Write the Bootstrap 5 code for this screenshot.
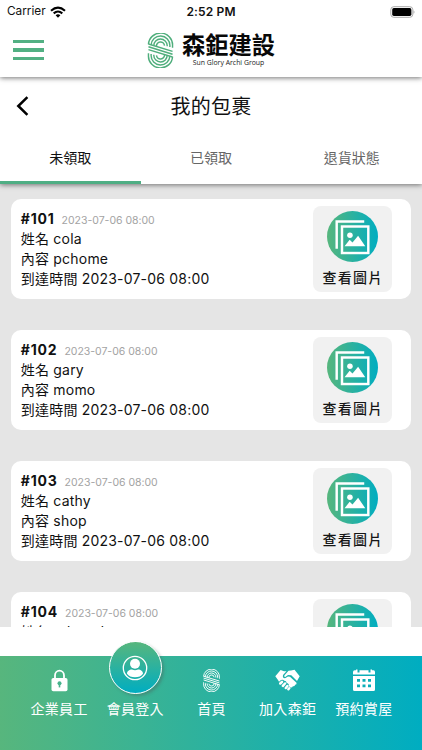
<!DOCTYPE html>
<html lang="zh-Hant">
<head>
<meta charset="utf-8">
<meta name="viewport" content="width=device-width, initial-scale=1">
<title>我的包裹</title>
<link href="https://cdn.jsdelivr.net/npm/bootstrap@5.3.0/dist/css/bootstrap.min.css" rel="stylesheet">
<style>
body{font-family:Inter,"Noto Sans CJK TC",sans-serif;color:#111;height:750px;overflow:hidden;background:#fff}
.app{height:750px}
svg{display:block;flex:none}
.status{height:23px;font-size:11.8px;padding:0 7px 0 7px}
.status .clock{font-weight:600;font-size:12px;letter-spacing:.15px}
.status>div{flex:1 1 0}
.topbar{height:77px;box-shadow:0 1px 5px rgba(0,0,0,.55);z-index:3}
.brandrow{height:54px;padding:0 13px}
.burger{width:31px;gap:5.6px;display:flex;flex-direction:column;border:0;background:none;padding:0}
.burger span{height:3.2px;background:#52b083}
.sidecell{width:118px}
.brandname{font:700 23.3px/27px "Noto Sans CJK TC",sans-serif;color:#080808;white-space:nowrap;margin-top:-2px}
.brandsub{font:6.9px/9px "Open Sans",sans-serif;color:#222;white-space:nowrap}
.heading{height:107px;box-shadow:0 1px 5px rgba(0,0,0,.5);z-index:2}
.titlerow{height:58px;padding:0 15px}
.titlerow h1{font-size:20px;font-weight:400;letter-spacing:.3px;padding-top:1px}
.tabs .nav-link{height:49px;line-height:46px;padding:0;color:#666;font-size:14px;font-weight:400;border-bottom:0}
.tabs .nav-link.active{color:#111;border-bottom:3px solid #4fae84}
.list{height:443px;background:#e5e5e5;padding:15px 11px 0 10.5px}
.parcel{height:100px;margin-bottom:31px;border-radius:10px;padding:7px 19px 0 10.3px}
.info{font-size:14px;line-height:20px;padding-top:2.5px;white-space:nowrap;letter-spacing:.2px}
.info>div{height:20px}
.num{font-weight:700;letter-spacing:.8px}
.stamp{font-size:10.5px;line-height:1;color:#a3a3a3;margin-left:7px;letter-spacing:-.02px}
.photo{width:79px;height:86px;background:#f1f1f1;border-radius:8px;padding-top:5px;border:0;color:#161616}
.photo div{font-size:14px;line-height:20px;letter-spacing:1.2px;margin-top:6px;font-weight:500;padding-left:1px}
.gap-strip{height:29px}
.bottom{height:94px;background:linear-gradient(90deg,#57b67d,#00adc1);padding:0 20px 0 21px;z-index:2}
.bottom a{width:76.2px;color:#fff;text-decoration:none;font-size:14px;letter-spacing:.3px;white-space:nowrap}
.icobox{height:43px;padding-top:13px}
.bottom .lbl{line-height:20px}
.avatar{width:53px;height:53px;border:1.5px solid #fff;border-radius:50%;background:linear-gradient(180deg,#57b67d,#00adc1);margin-top:-28px;box-shadow:2px 2px 3px rgba(80,80,80,.35);flex:none}
</style>
</head>
<body>
<svg width="0" height="0" class="position-absolute" aria-hidden="true">
<defs>
<linearGradient id="disc"><stop stop-color="#57b67d"/><stop offset="1" stop-color="#00adc1"/></linearGradient>
<symbol id="emblem" viewBox="0 0 25 34">
<g fill="none" stroke="currentColor" stroke-width="1.4">
<path d="M24.2 14.3V12.2A11.7 11.5 0 0 0 .8 11M21.6 13.500V12.200A9.100 9 0 0 0 3.400 11.600M19 12.800V12.200A6.500 6.400 0 0 0 6 12.400M16.400 12.200A3.900 3.800 0 0 0 8.600 13"/>
<path transform="rotate(180 12.5 17)" d="M24.2 14.3V12.2A11.7 11.5 0 0 0 .8 11M21.6 13.500V12.200A9.100 9 0 0 0 3.400 11.600M19 12.800V12.200A6.500 6.400 0 0 0 6 12.400M16.400 12.200A3.900 3.800 0 0 0 8.600 13"/>
<path d="M.8 10.700L24.200 17.800M.8 13.400L24.200 20.600M.8 16.200L24.200 23.300"/>
</g></symbol>
<symbol id="gallery" viewBox="0 0 50 50"><circle cx="25" cy="25" r="25" fill="url(#disc)"/>
<g fill="none" stroke="#fff" stroke-width="2.4"><path d="M9.500 37V10.200H36.500"/><rect x="14.700" y="15.200" width="25.800" height="26"/></g>
<circle cx="22.500" cy="23.700" r="2.700" fill="#fff"/><path d="M17.200 34.500L22.200 28.300 25 31 30.500 24.200 37.500 34.500Z" fill="#fff"/></symbol>
</defs></svg>
<main class="app d-flex flex-column">
<header class="topbar bg-white flex-shrink-0 position-relative">
<div class="status d-flex align-items-center">
<div class="d-flex align-items-center gap-1"><span>Carrier</span>
<svg width="16" height="12" viewBox="0 0 16 12"><g fill="none" stroke="#000" stroke-width="2.1"><path d="M1 4.7Q8-1.6 15 4.7M3.7 7.4Q8 3.6 12.3 7.4"/></g><path d="M5.6 9.2Q8 7.2 10.4 9.2L8 11.7Z"/></svg></div>
<div class="clock text-center text-nowrap">2:52 PM</div>
<div class="d-flex justify-content-end"><svg width="25" height="12" viewBox="0 0 25 12"><rect x=".8" y=".7" width="22" height="10.6" rx="3" fill="none" stroke="#aaa"/><rect x="2.2" y="2.1" width="19.200" height="7.8" rx="1.6"/><path d="M23.700 4.2q1.4 1.8 0 3.6z" fill="#888"/></svg></div>
</div>
<div class="brandrow d-flex align-items-center justify-content-between">
<div class="sidecell"><button class="burger" aria-label="選單"><span></span><span></span><span></span></button></div>
<div class="d-flex align-items-center gap-2">
<svg width="27" height="35" color="#4fae7c"><use href="#emblem"/></svg>
<div class="text-center"><div class="brandname">森鉅建設</div><div class="brandsub">Sun Glory Archi Group</div></div>
</div>
<div class="sidecell"></div>
</div>
</header>
<section class="heading bg-white flex-shrink-0 position-relative">
<div class="titlerow d-flex align-items-center justify-content-between">
<svg width="16" height="20" viewBox="0 0 16 20"><path d="M12.400 1.200L3.300 10 12.400 18.800" fill="none" stroke="#000" stroke-width="2.5"/></svg>
<h1 class="m-0">我的包裹</h1><span class="px-2"></span>
</div>
<nav class="tabs nav nav-fill row-cols-3 text-center">
<a class="nav-link active">未領取</a><a class="nav-link">已領取</a><a class="nav-link">退貨狀態</a>
</nav>
</section>
<section class="list flex-shrink-0 overflow-hidden">
<article class="parcel bg-white d-flex justify-content-between"><div class="info"><div><span class="num">#101</span><span class="stamp">2023-07-06 08:00</span></div><div>姓名 cola</div><div>內容 pchome</div><div>到達時間 2023-07-06 08:00</div></div><button class="photo d-flex flex-column align-items-center"><svg width="51" height="51"><use href="#gallery"/></svg><div>查看圖片</div></button></article>
<article class="parcel bg-white d-flex justify-content-between"><div class="info"><div><span class="num">#102</span><span class="stamp">2023-07-06 08:00</span></div><div>姓名 gary</div><div>內容 momo</div><div>到達時間 2023-07-06 08:00</div></div><button class="photo d-flex flex-column align-items-center"><svg width="51" height="51"><use href="#gallery"/></svg><div>查看圖片</div></button></article>
<article class="parcel bg-white d-flex justify-content-between"><div class="info"><div><span class="num">#103</span><span class="stamp">2023-07-06 08:00</span></div><div>姓名 cathy</div><div>內容 shop</div><div>到達時間 2023-07-06 08:00</div></div><button class="photo d-flex flex-column align-items-center"><svg width="51" height="51"><use href="#gallery"/></svg><div>查看圖片</div></button></article>
<article class="parcel bg-white d-flex justify-content-between"><div class="info"><div><span class="num">#104</span><span class="stamp">2023-07-06 08:00</span></div><div>姓名 edward</div></div><button class="photo d-flex flex-column align-items-center"><svg width="51" height="51"><use href="#gallery"/></svg></button></article>
</section>
<div class="gap-strip flex-shrink-0 bg-white"></div>
<nav class="bottom d-flex flex-shrink-0 position-relative">
<a class="d-flex flex-column align-items-center"><div class="icobox"><svg width="17" height="23" viewBox="0 0 17 23"><path d="M4 10V6.500a4.500 4.800 0 0 1 9 0V10" fill="none" stroke="#fff" stroke-width="1.8"/><rect x=".5" y="9" width="16" height="13.2" rx="1.8" fill="#fff"/><circle cx="8.5" cy="14.2" r="2" fill="#46b28c"/><path d="M7.700 15h1.600v3.400H7.700z" fill="#46b28c"/></svg></div><span class="lbl">企業員工</span></a>
<a class="d-flex flex-column align-items-center"><div class="icobox"><div class="avatar d-flex align-items-center justify-content-center"><svg width="26" height="26" viewBox="0 0 26 26"><circle cx="13" cy="13" r="11.7" fill="none" stroke="#fff" stroke-width="1.3"/><circle cx="13" cy="8.8" r="5" fill="#fff"/><path d="M5 18.800c0-2.500 2.200-4.200 5-4.200q3 1.200 6 0c2.800 0 5 1.700 5 4.200-1.500 2.400-4.500 3.500-8 3.500s-6.500-1.100-8-3.500Z" fill="#fff"/></svg></div></div><span class="lbl">會員登入</span></a>
<a class="d-flex flex-column align-items-center"><div class="icobox"><svg width="17" height="23"><use href="#emblem"/></svg></div><span class="lbl">首頁</span></a>
<a class="d-flex flex-column align-items-center"><div class="icobox"><svg width="25" height="22" viewBox="0 0 25 22"><g fill="#fff"><path d="M.3 7.200L5.600 1 9 2.300 11.500 2.300 8 6Q7.300 9.300 10 9.300L13 7.500 15 7.700 21.500 13.700Q22 15.800 20 15.700 19.800 17.700 17.800 17.200 17.300 19 15.500 18.500L14 17.200Q14 14.200 11.700 14 11.200 11.600 9.200 11.800 8 10 6 11L4 12.800 3 11Z"/><path d="M13.500 1.800L16 1.500 19.500.8 24.700 7.200 22 11.900 16.300 6.300 13 6 10.300 8Q8.900 8 9.300 6.500Z"/></g><g stroke="#fff" stroke-width="2.500" stroke-linecap="round"><path d="M5.300 14.500L7 12.800M7.900 16.900L10 14.500M10.800 19L12.400 17M13.400 20.300L14.200 19.300"/></g></svg></div><span class="lbl">加入森鉅</span></a>
<a class="d-flex flex-column align-items-center"><div class="icobox"><svg width="24" height="23" viewBox="0 0 24 23"><path fill="#fff" fill-rule="evenodd" d="M1 5.500V3Q1 1.300 2.700 1.300H4V.5H5.500V3.500H7.500V1.300H16.500V3.500H18.500V.5H20V1.300H21.500Q23 1.300 23 3V5.500ZM1 7H23V20.500Q23 22 21.500 22H2.500Q1 22 1 20.500ZM5 10V12.800H8V10ZM10.500 10V12.800H13.500V10ZM16 10V12.800H19V10ZM5 15.500V18.300H8V15.500ZM10.500 15.500V18.300H13.500V15.500ZM16 15.500V18.300H19V15.500Z"/></svg></div><span class="lbl">預約賞屋</span></a>
</nav>
</main>
<script src="https://cdn.jsdelivr.net/npm/bootstrap@5.3.0/dist/js/bootstrap.bundle.min.js"></script>
</body>
</html>
